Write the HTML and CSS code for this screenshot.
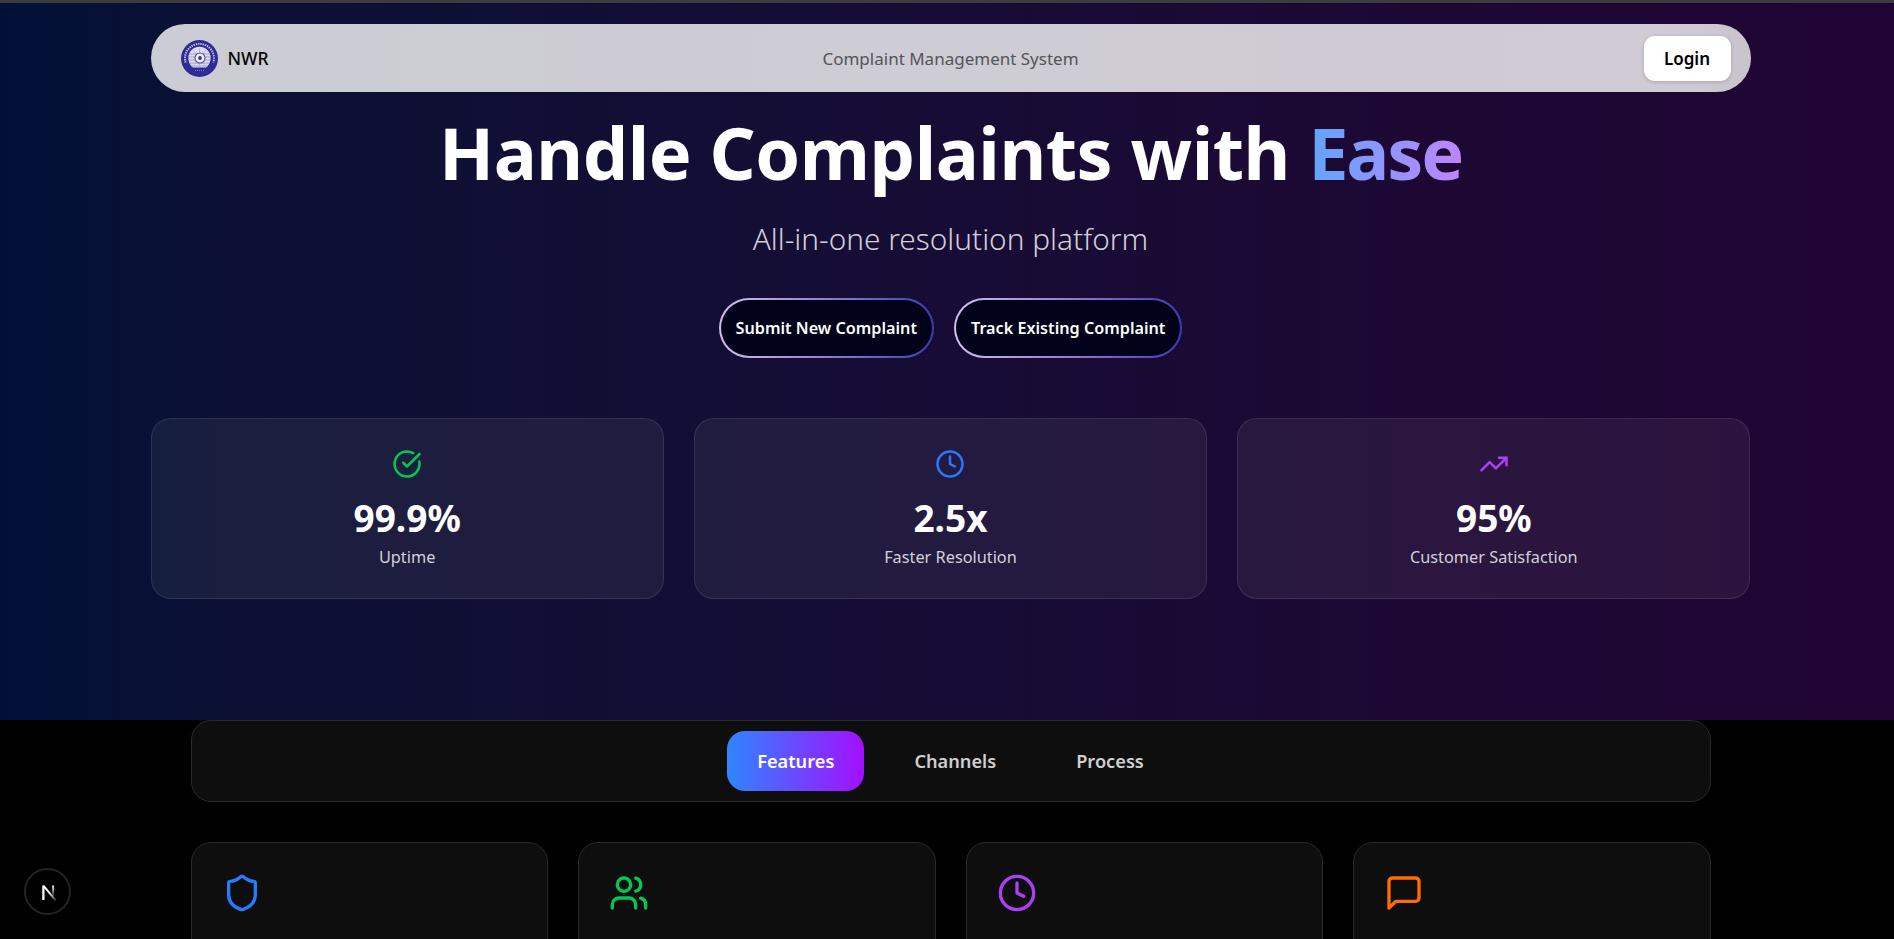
FILE: index.html
```html
<!DOCTYPE html>
<html lang="en">
<head>
<meta charset="utf-8">
<title>NWR Complaint Management System</title>
<link rel="stylesheet" href="styles.css">
</head>
<body>
<div class="page">
  <div class="topline"></div>
  <section class="hero">
    <header class="nav">
      <div class="brand">
        <svg class="emblem" viewBox="0 0 37 37" aria-hidden="true">
          <circle cx="18.5" cy="18.5" r="18.5" fill="#2f2b96"/>
          <path d="M4.6 22.5A14.5 14.5 0 1 1 32.4 22.5" fill="none" stroke="#c9c8e6" stroke-width="2" stroke-dasharray="1.3 1"/>
          <path d="M7.5 20a11.2 11.2 0 1 1 22 0c-.6 3.4-2 5.6-4.4 7.4h-13.2c-2.400-1.800-3.800-4-4.400-7.400z" fill="#dcdcea"/>
          <path d="M8 14h21M7.500 17h22M7.500 20h22M8.500 23h20M10 26h17" stroke="#9392c4" stroke-width=".8"/>
          <path d="M18.500 8v19M12 10l13 16M25 10L12 26" stroke="#aeadd2" stroke-width=".7"/>
          <circle cx="19" cy="18" r="5" fill="#eeeef7" stroke="#4f4d9d" stroke-width="1.100"/>
          <circle cx="19" cy="18" r="1.900" fill="#37348f"/>
          <path d="M14 30.500h9" stroke="#8f8dc6" stroke-width=".8" stroke-dasharray="1 1"/>
        </svg>
        <span class="brand-name">NWR</span>
      </div>
      <div class="nav-title">Complaint Management System</div>
      <button class="login">Login</button>
    </header>

    <h1 class="headline">Handle Complaints with <span class="accent">Ease</span></h1>
    <p class="sub">All-in-one resolution platform</p>

    <div class="cta-row">
      <button class="cta">Submit New Complaint</button>
      <button class="cta">Track Existing Complaint</button>
    </div>

    <div class="stats">
      <div class="stat">
        <svg class="stat-icon green" viewBox="0 0 24 24"><path d="M21.801 10A10 10 0 1 1 17 3.335"/><path d="m9 11 3 3L22 4"/></svg>
        <div class="stat-value">99.9%</div>
        <div class="stat-label">Uptime</div>
      </div>
      <div class="stat">
        <svg class="stat-icon blue" viewBox="0 0 24 24"><circle cx="12" cy="12" r="10"/><polyline points="12 6 12 12 16 14"/></svg>
        <div class="stat-value">2.5x</div>
        <div class="stat-label">Faster Resolution</div>
      </div>
      <div class="stat">
        <svg class="stat-icon purple" viewBox="0 0 24 24"><polyline points="22 7 13.5 15.5 8.5 10.5 2 17"/><polyline points="16 7 22 7 22 13"/></svg>
        <div class="stat-value">95%</div>
        <div class="stat-label">Customer Satisfaction</div>
      </div>
    </div>
  </section>

  <main class="lower">
    <nav class="tabs">
      <button class="tab tab-active">Features</button>
      <button class="tab">Channels</button>
      <button class="tab">Process</button>
    </nav>
    <div class="features">
      <article class="feature">
        <svg class="feature-icon blue" viewBox="0 0 24 24"><path d="M20 13c0 5-3.5 7.5-7.66 8.95a1 1 0 0 1-.67-.01C7.5 20.5 4 18 4 13V6a1 1 0 0 1 1-1c2 0 4.5-1.2 6.24-2.72a1.17 1.17 0 0 1 1.52 0C14.51 3.81 17 5 19 5a1 1 0 0 1 1 1z"/></svg>
      </article>
      <article class="feature">
        <svg class="feature-icon green" viewBox="0 0 24 24"><path d="M16 21v-2a4 4 0 0 0-4-4H6a4 4 0 0 0-4 4v2"/><circle cx="9" cy="7" r="4"/><path d="M22 21v-2a4 4 0 0 0-3-3.87"/><path d="M16 3.13a4 4 0 0 1 0 7.75"/></svg>
      </article>
      <article class="feature">
        <svg class="feature-icon purple" viewBox="0 0 24 24"><circle cx="12" cy="12" r="10"/><polyline points="12 6 12 12 16 14"/></svg>
      </article>
      <article class="feature">
        <svg class="feature-icon orange" viewBox="0 0 24 24"><path d="M21 15a2 2 0 0 1-2 2H7l-4 4V5a2 2 0 0 1 2-2h14a2 2 0 0 1 2 2z"/></svg>
      </article>
    </div>
  </main>

  <div class="next-badge">
    <svg viewBox="0 0 24 24" width="24" height="24" aria-hidden="true">
      <defs>
        <linearGradient id="nfade" x1="0" y1="0" x2="0" y2="1"><stop offset="0" stop-color="#fff"/><stop offset="1" stop-color="#fff" stop-opacity=".1"/></linearGradient>
        <linearGradient id="dfade" gradientUnits="userSpaceOnUse" x1="8" y1="6" x2="20" y2="21"><stop offset=".45" stop-color="#fff"/><stop offset="1" stop-color="#fff" stop-opacity=".15"/></linearGradient>
      </defs>
      <path d="M6.500 5.500v14.500h1.800V8.200L19 21l1.400-1L8.600 5.500z" fill="url(#dfade)"/>
      <path d="M6.500 5.500h1.800V20H6.500z" fill="#fff"/>
      <rect x="16.200" y="5.500" width="1.800" height="11" fill="url(#nfade)"/>
    </svg>
  </div>
</div>
</body>
</html>
```
FILE: styles.css
```css
* { box-sizing: border-box; }
html, body {
  margin: 0;
  height: 939px;
  overflow: hidden;
  background: #000;
}
body { font-family: "Noto Sans", "Open Sans", sans-serif; color: #fff; }
button { font-family: inherit; border: 0; cursor: pointer; }

.page { position: relative; width: 1901px; height: 939px; overflow: hidden; }
.topline { height: 3px; background: #3c3c3e; }

.hero {
  height: 717px;
  padding-top: 21px;
  background: linear-gradient(90deg, #001138 0%, #0c1034 12%, #150d35 45%, #1d0834 75%, #200433 100%);
  display: flex;
  flex-direction: column;
  align-items: center;
}

.nav {
  width: 1600px;
  height: 68px;
  flex: none;
  padding: 0 20px;
  display: grid;
  grid-template-columns: 1fr auto 1fr;
  align-items: center;
  border-radius: 34px;
  background: rgba(252, 252, 252, .8);
  box-shadow: inset -60px 0 40px -40px rgba(180, 175, 190, .3);
}
.brand { display: flex; align-items: center; gap: 10px; margin-left: 10px; }
.emblem { width: 37px; height: 37px; display: block; }
.brand-name { font-size: 17.500px; font-weight: 500; color: #050505; }
.nav-title { font-size: 17px; font-weight: 400; color: #555458; }
.login {
  justify-self: end;
  width: 87px;
  height: 45px;
  background: #fff;
  border-radius: 11px;
  font-size: 17px;
  font-weight: 600;
  color: #000;
  box-shadow: 0 1px 4px rgba(0, 0, 0, .18);
}

.headline {
  margin: 20px 0 0;
  font-size: 72px;
  line-height: 80px;
  font-weight: 700;
  letter-spacing: -.45px;
  color: #fff;
}
.accent {
  letter-spacing: -2.200px;
  background: linear-gradient(90deg, #60a5fa, #c084fc);
  -webkit-background-clip: text;
  background-clip: text;
  color: transparent;
}
.sub {
  margin: 28px 0 0;
  font-size: 29.800px;
  line-height: 38px;
  font-weight: 300;
  color: #d3cfd9;
}

.cta-row { display: flex; gap: 20px; margin-top: 40px; }
.cta {
  height: 60px;
  padding: 0 15px;
  border-radius: 30px;
  border: 2px solid transparent;
  background:
    linear-gradient(#02031a, #02031a) padding-box,
    linear-gradient(90deg, #d3bfe9 0%, #8c74d2 55%, #3b3cb4 100%) border-box;
  color: #fff;
  font-size: 16.200px;
  font-weight: 600;
}

.stats {
  width: 1600px;
  display: grid;
  grid-template-columns: repeat(3, 1fr);
  gap: 30px;
  margin-top: 60px;
}
.stat {
  height: 181px;
  padding: 30px 20px;
  display: flex;
  flex-direction: column;
  align-items: center;
  border-radius: 20px;
  border: 1px solid rgba(255, 255, 255, .1);
  background: rgba(255, 255, 255, .06);
}
.stat-icon, .feature-icon {
  fill: none;
  stroke: currentColor;
  stroke-width: 2;
  stroke-linecap: round;
  stroke-linejoin: round;
  display: block;
  flex: none;
}
.stat-icon { width: 30px; height: 30px; }
.stat-value { margin-top: 15px; font-size: 37px; line-height: 48px; font-weight: 700; color: #fff; }
.stat-label { margin-top: 3px; font-size: 16.300px; line-height: 24px; color: #d2d1d8; }

.green { color: #00c853; }
.blue { color: #2979ff; }
.purple { color: #aa3ff5; }
.orange { color: #ff6d00; }

.lower { width: 1520px; margin: 0 auto; }
.tabs {
  height: 82px;
  padding: 10px;
  display: flex;
  justify-content: center;
  gap: 20px;
  border-radius: 20px;
  border: 1px solid #2a2a2a;
  background: #0e0e0e;
}
.tab {
  height: 60px;
  padding: 0 30px;
  border-radius: 18px;
  background: transparent;
  color: #d0d0d0;
  font-size: 18.200px;
  font-weight: 600;
}
.tab-active {
  color: #fff;
  background: linear-gradient(90deg, #2f86ff, #a30fff);
}

.features {
  display: grid;
  grid-template-columns: repeat(4, 1fr);
  gap: 30px;
  margin-top: 40px;
}
.feature {
  height: 240px;
  padding: 30px;
  border-radius: 20px;
  border: 1px solid #2a2a2a;
  background: #0e0e0e;
}
.feature-icon { width: 40px; height: 40px; }

.next-badge {
  position: absolute;
  left: 24px;
  top: 868px;
  width: 47px;
  height: 47px;
  display: flex;
  align-items: center;
  justify-content: center;
  border-radius: 50%;
  background: #000;
  border: 2px solid #242424;
}
```
